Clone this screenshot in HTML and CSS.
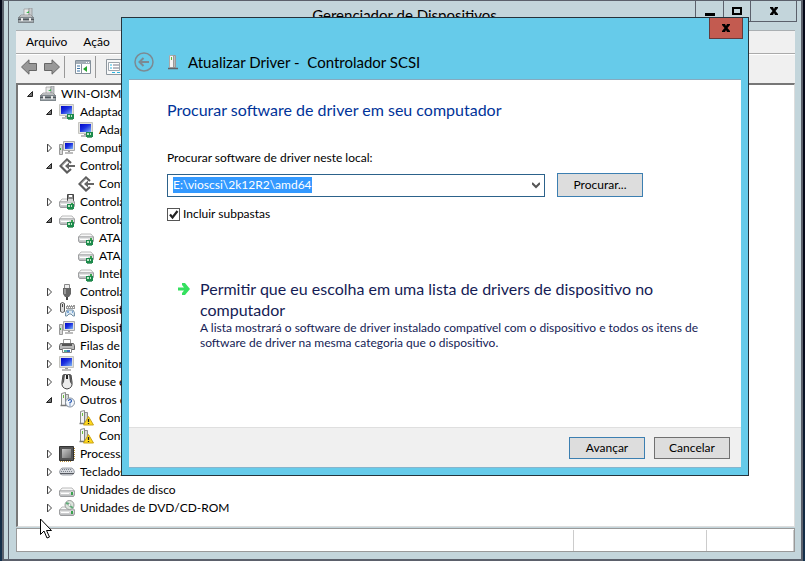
FILE: index.html
```html
<!DOCTYPE html>
<html lang="pt-BR">
<head>
<meta charset="utf-8">
<title>Gerenciador de Dispositivos</title>
<link rel="stylesheet" href="styles.css">
</head>
<body>
<svg class="defs" aria-hidden="true">
  <defs>
    <linearGradient id="screen" x1="0" y1="0" x2="1" y2="1"><stop offset="0" stop-color="#0008c8"/><stop offset=".45" stop-color="#1c30e0"/><stop offset="1" stop-color="#7db4f5"/></linearGradient>
    <linearGradient id="metal" x1="0" y1="0" x2="0" y2="1"><stop offset="0" stop-color="#f4f4f4"/><stop offset="1" stop-color="#b2b4b6"/></linearGradient>
    <linearGradient id="dark" x1="0" y1="0" x2="1" y2="1"><stop offset="0" stop-color="#c8c8c8"/><stop offset="1" stop-color="#6e6e6e"/></linearGradient>
    <symbol id="open" viewBox="0 0 8 10"><path d="M6.500 2.500v5h-5z" fill="#777" stroke="#222" stroke-width="1"/></symbol>
    <symbol id="closed" viewBox="0 0 8 10"><path d="M2.500 1v8l4-4z" fill="#fff" stroke="#444" stroke-width="1"/></symbol>
    <symbol id="card" viewBox="0 0 16 16"><path d="M8 10h7v5H8z" fill="#1c8a4c"/><path d="M9 11h2v2H9zM12 11h1v2h-1z" fill="#bfe8c4"/><path d="M9 15h5v1H9z" fill="#6aa881"/></symbol>
    <symbol id="computer" viewBox="0 0 16 16"><path d="M6 1h5v8H6z" fill="#ececec" stroke="#999" stroke-width=".7"/><path d="M11 0h3v9h-3z" fill="#c9ccce" stroke="#8a8d90" stroke-width=".7"/><path d="M8 5l3-2v2z" fill="#35b44a"/><path d="M1 9l2-2h10l2 2z" fill="#d7dbdd" stroke="#777" stroke-width=".6"/><path d="M0 9h16v6H0z" fill="#7f878c"/><path d="M0 11h16v1H0z" fill="#4f565b"/><path d="M1 12h14v2H1z" fill="#a4abaf"/><path d="M3 10h2v3H3zM11 10h2v3h-2z" fill="#e8e8e8"/></symbol>
    <symbol id="monitor" viewBox="0 0 16 16"><path d="M.5 .5h14v11H.5z" fill="#e1e1df" stroke="#c4c4bf"/><path d="M2 2h11v8H2z" fill="url(#screen)"/><path d="M6 12h3v1H6z" fill="#999"/><path d="M3 13h9v2H3z" fill="#bcbcbc"/></symbol>
    <symbol id="netcard" viewBox="0 0 16 16"><use href="#monitor"/><use href="#card"/></symbol>
    <symbol id="pc" viewBox="0 0 16 16"><path d="M.5 4.500h3v10h-3z" fill="#d5d5d5" stroke="#999"/><path d="M1 8h1v2H1z" fill="#2caf3d"/><path d="M4.500 1.500h11v9h-11z" fill="#e1e1df" stroke="#aaa"/><path d="M6 3h8v6H6z" fill="url(#screen)"/><path d="M9 11h2v1H9z" fill="#999"/><path d="M6 12h8v2H6z" fill="#bcbcbc"/></symbol>
    <symbol id="storage" viewBox="0 0 16 16"><path d="M12 5L8 1.500 1.500 8 8 14.500l4-3.500" fill="none" stroke="#5c5c5c" stroke-width="2.200"/><path d="M7 8h9" fill="none" stroke="#666" stroke-width="2"/><path d="M6 8l4-3.500v7z" fill="#666"/><path d="M3 7.500L8 2.500" stroke="#bbb" stroke-width="1"/></symbol>
    <symbol id="drive" viewBox="0 0 16 16"><path d="M3 6h10l2.500 3H.5z" fill="#f8f8f8" stroke="#aaa" stroke-width=".8"/><path d="M.5 9h15v4l-1 1.500h-13l-1-1.500z" fill="url(#metal)" stroke="#8b8d8f" stroke-width=".8"/><path d="M2 11h8v1H2z" fill="#fff"/><path d="M12 10h2v3h-2z" fill="#39a24c"/></symbol>
    <symbol id="drivecard" viewBox="0 0 16 16"><use href="#drive" y="-2"/><use href="#card"/></symbol>
    <symbol id="floppy" viewBox="0 0 16 16"><use href="#drive" y="-1"/><path d="M8.500 .5h6v6h-6z" fill="#888" stroke="#444"/><path d="M10 1h3v2h-3z" fill="#fff"/><path d="M9 5h5v3H9z" fill="#d8d8d8"/><use href="#card"/></symbol>
    <symbol id="usb" viewBox="0 0 16 16"><path d="M5.500 .5h5v4h-5z" fill="#eee" stroke="#888"/><path d="M4 4h8v6l-2 3H6l-2-3z" fill="#666"/><path d="M5 5h2v5H5z" fill="#999"/><path d="M7 13h2v3H7z" fill="#444"/></symbol>
    <symbol id="hid" viewBox="0 0 16 16"><path d="M1.500 1.500q2-2 4 0v8q-2 2-4 0z" fill="#ddd" stroke="#555"/><path d="M3 2h1v3H3z" fill="#444"/><path d="M7 3h9v4H7z" fill="#999"/><path d="M7 3h1v1H7zm2 0h1v1H9zm2 0h1v1h-1zm2 0h1v1h-1zM8 5h1v1H8zm2 0h1v1h-1zm2 0h1v1h-1zm2 0h1v1h-1z" fill="#fff"/><path d="M8 8h6q2 2 1.500 6H14l-2-2h-2l-2 2H6.500Q6 10 8 8z" fill="#dce9f3" stroke="#64839a" stroke-width=".9"/><path d="M8 10h2M13 10h1" stroke="#1d66bf"/></symbol>
    <symbol id="printer" viewBox="0 0 16 16"><path d="M4.500 1.500h7v5h-7z" fill="#fff" stroke="#999"/><path d="M1.500 5.500h13l1 2v4h-15v-4z" fill="#bbb" stroke="#666"/><path d="M3 6h10v2H3z" fill="#555"/><path d="M3.500 10.500h9v4h-9z" fill="#fff" stroke="#888"/><path d="M5 12h3v2H5z" fill="#4fb2a0"/><path d="M8 12h3v2H8z" fill="#356cbf"/></symbol>
    <symbol id="mouse" viewBox="0 0 16 16"><path d="M4 1q4-2 8 0l1 7q1 6-5 7-6-1-5-7z" fill="#ededed" stroke="#444"/><path d="M4 1h2l-1 7-2 3zM12 1h-2l1 7 2 3z" fill="#555"/><path d="M7 1h2v4H7z" fill="#222"/></symbol>
    <symbol id="device" viewBox="0 0 16 16"><path d="M3.500 1.500l4-1v13h-4z" fill="#f3f3f3" stroke="#8b8f8b"/><path d="M7.500 2.500h3v11h-3z" fill="#d4d8d4" stroke="#777" stroke-width=".8"/><path d="M5 3h1v3H5z" fill="#68c03c"/><path d="M2.500 13.500h9" stroke="#777" stroke-width="1.500"/></symbol>
    <symbol id="unknown" viewBox="0 0 16 16"><use href="#device" x="-1"/><circle cx="11" cy="10.500" r="4.500" fill="#f3f7fc" stroke="#7d8b9d"/><path d="M9.500 9q0-1.500 1.500-1.500T12.500 9q0 1-1.500 1.500v1M11 12.500v1" fill="none" stroke="#2557b0" stroke-width="1.200"/></symbol>
    <symbol id="warning" viewBox="0 0 16 16"><use href="#device" x="-1"/><path d="M10.500 6.500l5 8.500h-10z" fill="#ffd91c" stroke="#c9a318" stroke-linejoin="round"/><path d="M10.500 9v3M10.500 13v1" stroke="#222" stroke-width="1.300"/></symbol>
    <symbol id="cpu" viewBox="0 0 16 16"><path d="M1 15.500h12M15.500 2v12" stroke="#bd9540" stroke-dasharray="1 1" stroke-width="1.500"/><path d="M.5 .5h14v14H.5z" fill="#555" stroke="#333"/><path d="M3 3h9v9H3z" fill="url(#dark)"/></symbol>
    <symbol id="keyboard" viewBox="0 0 16 16"><path d="M3 4h10q2 1 2.500 4-1 3-3 3h-9Q1 11 .5 8 1 5 3 4z" fill="#d4d7dc" stroke="#8b8f97" stroke-width=".8"/><path d="M3 5.500h10M2 7.500h12" stroke="#7b828c" stroke-dasharray="1 1"/><path d="M1 9h14v1H1z" fill="#565960"/></symbol>
    <symbol id="dvd" viewBox="0 0 16 16"><use href="#drive" y="1"/><circle cx="10.500" cy="5" r="4.500" fill="#dce5dd" stroke="#999"/><path d="M7 3l3 1M11 6l3 2" stroke="#60ac79" stroke-width="2"/><circle cx="10.500" cy="5" r="1.300" fill="#fff" stroke="#888" stroke-width=".5"/></symbol>
  </defs>
</svg>

<main class="window">
  <header class="titlebar">
    <svg class="icon app"><use href="#computer"/></svg>
    <h1>Gerenciador de Dispositivos</h1>
    <div class="controls">
      <button class="min" aria-label="Minimizar"><svg viewBox="0 0 12 10"><path d="M1 7h10v3H1z"/></svg></button>
      <button class="max" aria-label="Maximizar"><svg viewBox="0 0 12 10"><path d="M2 2h8v6H2z" fill="none" stroke="#000" stroke-width="2"/></svg></button>
      <button class="end" aria-label="Fechar"><svg viewBox="0 0 12 10"><path d="M2 1h3l1 2 1-2h3v1L7.500 5 10 8v1H7L6 7 5 9H2V8l2.500-3L2 2z"/></svg></button>
    </div>
  </header>
  <div class="client">
    <nav class="menubar"><button>Arquivo</button><button>Ação</button></nav>
    <div class="toolbar">
      <button aria-label="Voltar"><svg width="16" height="16" viewBox="0 0 16 16"><path d="M.5 8L8 .8V4.500h7.500v7H8v3.700z" fill="#989898" stroke="#666"/></svg></button>
      <button aria-label="Avançar página"><svg width="16" height="16" viewBox="0 0 16 16"><path d="M15.500 8L8 .8V4.500H.5v7H8v3.700z" fill="#989898" stroke="#666"/></svg></button>
      <i></i>
      <button aria-label="Mostrar árvore"><svg width="16" height="14" viewBox="0 0 16 14"><path d="M.5 .5h15v13H.5z" fill="#fff" stroke="#84909b"/><path d="M1 1h14v3H1z" fill="#a3adb6"/><path d="M11 2h1v1h-1zM13 2h1v1h-1z" fill="#fff"/><path d="M6.500 4v9" stroke="#84909b"/><path d="M2 6h3M2 8.500h3M2 11h3" stroke="#3974a8"/><path d="M12 6v6L8 9z" fill="#24a42c"/></svg></button>
      <i></i>
      <button aria-label="Propriedades"><svg width="16" height="16" viewBox="0 0 16 16"><path d="M.5 .5h15v15H.5z" fill="#f7f8f9" stroke="#8e979e"/><path d="M2.500 3.500h11v8h-11z" fill="#fff" stroke="#9da6ad"/><path d="M4 6h2M4 9h2" stroke="#2bb4df"/><path d="M7 6h6M7 9h6" stroke="#778"/><path d="M6 13.500h3M11 13.500h3" stroke="#2bb4df"/></svg></button>
    </div>
    <ul class="tree">
      <li><svg class="twist"><use href="#open"/></svg><svg class="icon"><use href="#computer"/></svg><span>WIN-OI3M9</span></li>
      <li class="l1"><svg class="twist"><use href="#open"/></svg><svg class="icon"><use href="#netcard"/></svg><span>Adaptadores</span></li>
      <li class="l2"><svg class="icon"><use href="#netcard"/></svg><span>Adaptador</span></li>
      <li class="l1"><svg class="twist"><use href="#closed"/></svg><svg class="icon"><use href="#pc"/></svg><span>Computador</span></li>
      <li class="l1"><svg class="twist"><use href="#open"/></svg><svg class="icon"><use href="#storage"/></svg><span>Controladores</span></li>
      <li class="l2"><svg class="icon"><use href="#storage"/></svg><span>Controlador</span></li>
      <li class="l1"><svg class="twist"><use href="#closed"/></svg><svg class="icon"><use href="#floppy"/></svg><span>Controladores</span></li>
      <li class="l1"><svg class="twist"><use href="#open"/></svg><svg class="icon"><use href="#drivecard"/></svg><span>Controladores</span></li>
      <li class="l2"><svg class="icon"><use href="#drivecard"/></svg><span>ATA Channel 0</span></li>
      <li class="l2"><svg class="icon"><use href="#drivecard"/></svg><span>ATA Channel 1</span></li>
      <li class="l2"><svg class="icon"><use href="#drivecard"/></svg><span>Intel(R)</span></li>
      <li class="l1"><svg class="twist"><use href="#closed"/></svg><svg class="icon"><use href="#usb"/></svg><span>Controladores</span></li>
      <li class="l1"><svg class="twist"><use href="#closed"/></svg><svg class="icon"><use href="#hid"/></svg><span>Dispositivos</span></li>
      <li class="l1"><svg class="twist"><use href="#closed"/></svg><svg class="icon"><use href="#pc"/></svg><span>Dispositivos</span></li>
      <li class="l1"><svg class="twist"><use href="#closed"/></svg><svg class="icon"><use href="#printer"/></svg><span>Filas de impressão</span></li>
      <li class="l1"><svg class="twist"><use href="#closed"/></svg><svg class="icon"><use href="#monitor"/></svg><span>Monitores</span></li>
      <li class="l1"><svg class="twist"><use href="#closed"/></svg><svg class="icon"><use href="#mouse"/></svg><span>Mouse e outros</span></li>
      <li class="l1"><svg class="twist"><use href="#open"/></svg><svg class="icon"><use href="#unknown"/></svg><span>Outros dispositivos</span></li>
      <li class="l2"><svg class="icon"><use href="#warning"/></svg><span>Controlador</span></li>
      <li class="l2"><svg class="icon"><use href="#warning"/></svg><span>Controlador</span></li>
      <li class="l1"><svg class="twist"><use href="#closed"/></svg><svg class="icon"><use href="#cpu"/></svg><span>Processadores</span></li>
      <li class="l1"><svg class="twist"><use href="#closed"/></svg><svg class="icon"><use href="#keyboard"/></svg><span>Teclados</span></li>
      <li class="l1"><svg class="twist"><use href="#closed"/></svg><svg class="icon"><use href="#drive"/></svg><span>Unidades de disco</span></li>
      <li class="l1"><svg class="twist"><use href="#closed"/></svg><svg class="icon"><use href="#dvd"/></svg><span>Unidades de DVD/CD-ROM</span></li>
    </ul>
    <footer class="status"><span></span><span></span><span></span></footer>
  </div>
</main>

<section class="dialog" role="dialog" aria-labelledby="dlg-title">
  <button class="dlg-close" aria-label="Fechar"><svg viewBox="0 0 12 10"><path d="M2 1h3l1 2 1-2h3v1L7.500 5 10 8v1H7L6 7 5 9H2V8l2.500-3L2 2z"/></svg></button>
  <header class="dlg-head">
    <button class="back" aria-label="Voltar"><svg width="20" height="20" viewBox="0 0 20 20"><circle cx="10" cy="10" r="9" fill="none" stroke="#7c8a93" stroke-width="1.500"/><path d="M15 10H6M9.500 6L5.500 10l4 4" fill="none" stroke="#7c8a93" stroke-width="2"/></svg></button>
    <svg class="icon" viewBox="0 0 16 16"><path d="M4.500 1.500h4v12h-4z" fill="#f5f5f5" stroke="#aaa"/><path d="M8.500 1.500h2v12h-2z" fill="#bbb" stroke="#999"/><path d="M6 3h1v3H6z" fill="#62be33"/><path d="M3 14.500h10" stroke="#60646a" stroke-width="1.500"/></svg>
    <h2 id="dlg-title">Atualizar Driver -&nbsp; Controlador SCSI</h2>
  </header>
  <form class="page">
    <div class="content">
      <h3>Procurar software de driver em seu computador</h3>
      <label class="caption" for="path">Procurar software de driver neste local:</label>
      <div class="pick">
        <div class="combo">
          <input id="path" type="text" value="E:\vioscsi\2k12R2\amd64" spellcheck="false">
          <button type="button" aria-label="Locais recentes"><svg width="8" height="7" viewBox="0 0 8 7"><path d="M0 1l4 4 4-4" fill="none" stroke="#555" stroke-width="2"/></svg></button>
        </div>
        <button type="button" class="btn primary browse">Procurar...</button>
      </div>
      <div class="check">
        <span class="box"><input id="sub" type="checkbox" checked><svg viewBox="0 0 13 13"><path d="M3 6.500l2.500 3L10.500 3" fill="none" stroke="#222" stroke-width="2.200"/></svg></span>
        <label for="sub">Incluir subpastas</label>
      </div>
      <button type="button" class="command">
        <svg width="12" height="12" viewBox="0 0 12 12"><path d="M0 4.500h6L4 2V0h3l5 6-5 6H4v-2l2-2.500H0z" fill="#35e05f"/></svg>
        <span><strong>Permitir que eu escolha em uma lista de drivers de dispositivo no computador</strong><small>A lista mostrará o software de driver instalado compatível com o dispositivo e todos os itens de software de driver na mesma categoria que o dispositivo.</small></span>
      </button>
    </div>
    <div class="actions"><button type="button" class="btn primary">Avançar</button><button type="button" class="btn">Cancelar</button></div>
  </form>
</section>

<svg class="cursor" width="12" height="21" viewBox="0 0 12 21" aria-hidden="true"><path d="M.5 1v15.500L4 13l3 7 2.500-1-3-6.500h5z" fill="#fff" stroke="#000"/></svg>
<script src="app.js"></script>
</body>
</html>
```
FILE: styles.css
```css
* { box-sizing: border-box; }
html, body { height: 100%; }
body {
  margin: 0;
  padding: 0 2px 0;
  overflow: hidden;
  background: linear-gradient(#060919 0 60%, #16324d);
  color: #000;
  font: 12px/18px Lato, "Open Sans", sans-serif;
}
button, input { font: inherit; color: inherit; }
button { margin: 0; padding: 0; border: 0; background: none; }
h1, h2, h3, ul { margin: 0; padding: 0; font-weight: normal; }
.defs { position: absolute; width: 0; height: 0; }
.icon { width: 16px; height: 16px; flex: none; }

.window {
  display: flex;
  flex-direction: column;
  height: 100%;
  padding: 0 6px 7px 12px;
  background: linear-gradient(90deg, transparent 4px, #5b606b 4px 5px, transparent 5px), #c3d5db;
  border: 1px solid #5b606b;
  border-width: 1px 2px 2px;
}
.titlebar { display: flex; flex: none; height: 29px; margin: 0 -2px 0 0; }
.titlebar h1 { flex: 1; padding-left: 80px; text-align: center; font-size: 15px; line-height: 28px; white-space: nowrap; }
.app { margin: 7px 0 0 2px; }
.controls { display: flex; height: 21px; border: 1px solid #5b606b; border-top: 0; }
.controls button { display: grid; place-items: center; width: 27px; }
.controls button + button { border-left: 1px solid #5b606b; }
.controls .end { width: 46px; }
.controls svg, .dlg-close svg { width: 12px; height: 10px; }

.client { display: flex; flex: 1; flex-direction: column; min-height: 0; }
.menubar { display: flex; gap: 16px; height: 24px; padding-left: 10px; background: #f0f0f0; border-top: 1px solid #aaafb2; border-bottom: 1px solid #aaa; }
.toolbar { display: flex; align-items: center; height: 29px; padding: 0 5px 4px; background: #f0f0f0; border-top: 1px solid #fff; }
.toolbar button { display: grid; margin-right: 7px; }
.toolbar i { width: 1px; height: 22px; margin: 0 10px 0 -3px; background: #999; }
.tree { flex: 1; min-height: 0; overflow: hidden; list-style: none; background: #fff; border: 2px solid #777; border-width: 2px 1px 1px 2px; border-right-color: #ddd; border-bottom-color: #ddd; }
.tree li { display: flex; align-items: center; height: 18px; padding-left: 8px; white-space: nowrap; }
.tree .l1 { padding-left: 27px; }
.tree .l2 { padding-left: 60px; }
.tree span { margin-left: 5px; }
.twist { width: 8px; height: 10px; margin-right: 6px; }
.status { display: grid; grid-template-columns: 1fr 133px 87px; height: 24px; margin-top: 1px; background: #fff; border: 1px solid #999; }
.status span { margin: 1px 0 0; border-right: 1px solid #ccc; }

.dialog {
  position: absolute;
  inset: 17px 56px 85px 121px;
  display: flex;
  flex-direction: column;
  padding: 0 7px 7px;
  background: #66cbea;
  border: 1px solid #25333c;
}
.dlg-close { display: grid; place-items: center; flex: none; align-self: flex-end; width: 34px; height: 21px; margin-right: -2px; background: #c35b50; border: 1px solid #643a3c; border-top: 0; }
.dlg-head { display: flex; align-items: center; flex: none; height: 40px; padding: 6px 5px 0; }
.back { display: grid; margin-right: 11px; }
.dlg-head h2 { margin-left: 7px; font-size: 15px; }
.page { display: flex; flex: 1; flex-direction: column; min-height: 0; background: #fff; border-top: 1px solid #86aabf; border-bottom: 1px solid #86b5cd; }
.content { flex: 1; padding: 19px 38px 0; }
h3 { color: #003399; font-size: 16px; line-height: 22px; }
.caption { display: block; margin: 28px 0 6px; }
.pick { display: flex; gap: 12px; align-items: center; padding-right: 60px; }
.combo { display: flex; flex: 1; height: 23px; border: 1px solid #2c628b; }
.combo input { flex: 1; min-width: 0; padding: 0 5px; border: 0; outline: 0; background: #fff; caret-color: transparent; line-height: 16px; }
.combo input::selection { background: #3399ff; color: #fff; }
.combo button { display: grid; place-items: center; width: 17px; }
.btn { width: 76px; height: 22px; background: #ddd; border: 1px solid #707070; line-height: 18px; }
.btn.primary { border-color: #3c7fb1; }
.btn.browse { width: 86px; height: 24px; }
.check { display: flex; gap: 3px; align-items: center; margin-top: 8px; }
.box { display: grid; width: 13px; height: 13px; }
.box > * { grid-area: 1 / 1; width: 13px; height: 13px; }
.box input { appearance: none; margin: 0; border: 1px solid #555; background: #fff; }
.box svg { visibility: hidden; pointer-events: none; }
.box input:checked + svg { visibility: visible; }
.command { display: flex; gap: 10px; margin: 55px 0 0; padding: 0 0 0 11px; color: #151c55; text-align: left; }
.command svg { flex: none; margin-top: 5px; }
.command strong { display: block; font-size: 16px; font-weight: normal; line-height: 21px; }
.command small { display: block; font-size: 12px; line-height: 15px; }
.actions { display: flex; flex: none; justify-content: flex-end; gap: 9px; height: 40px; padding: 9px 11px; background: #f0f0f0; border-top: 1px solid #dfdfdf; }
.cursor { position: absolute; left: 40px; top: 518px; }
```
FILE: app.js
```javascript
const path = document.getElementById("path");
path.focus();
path.select();
```
